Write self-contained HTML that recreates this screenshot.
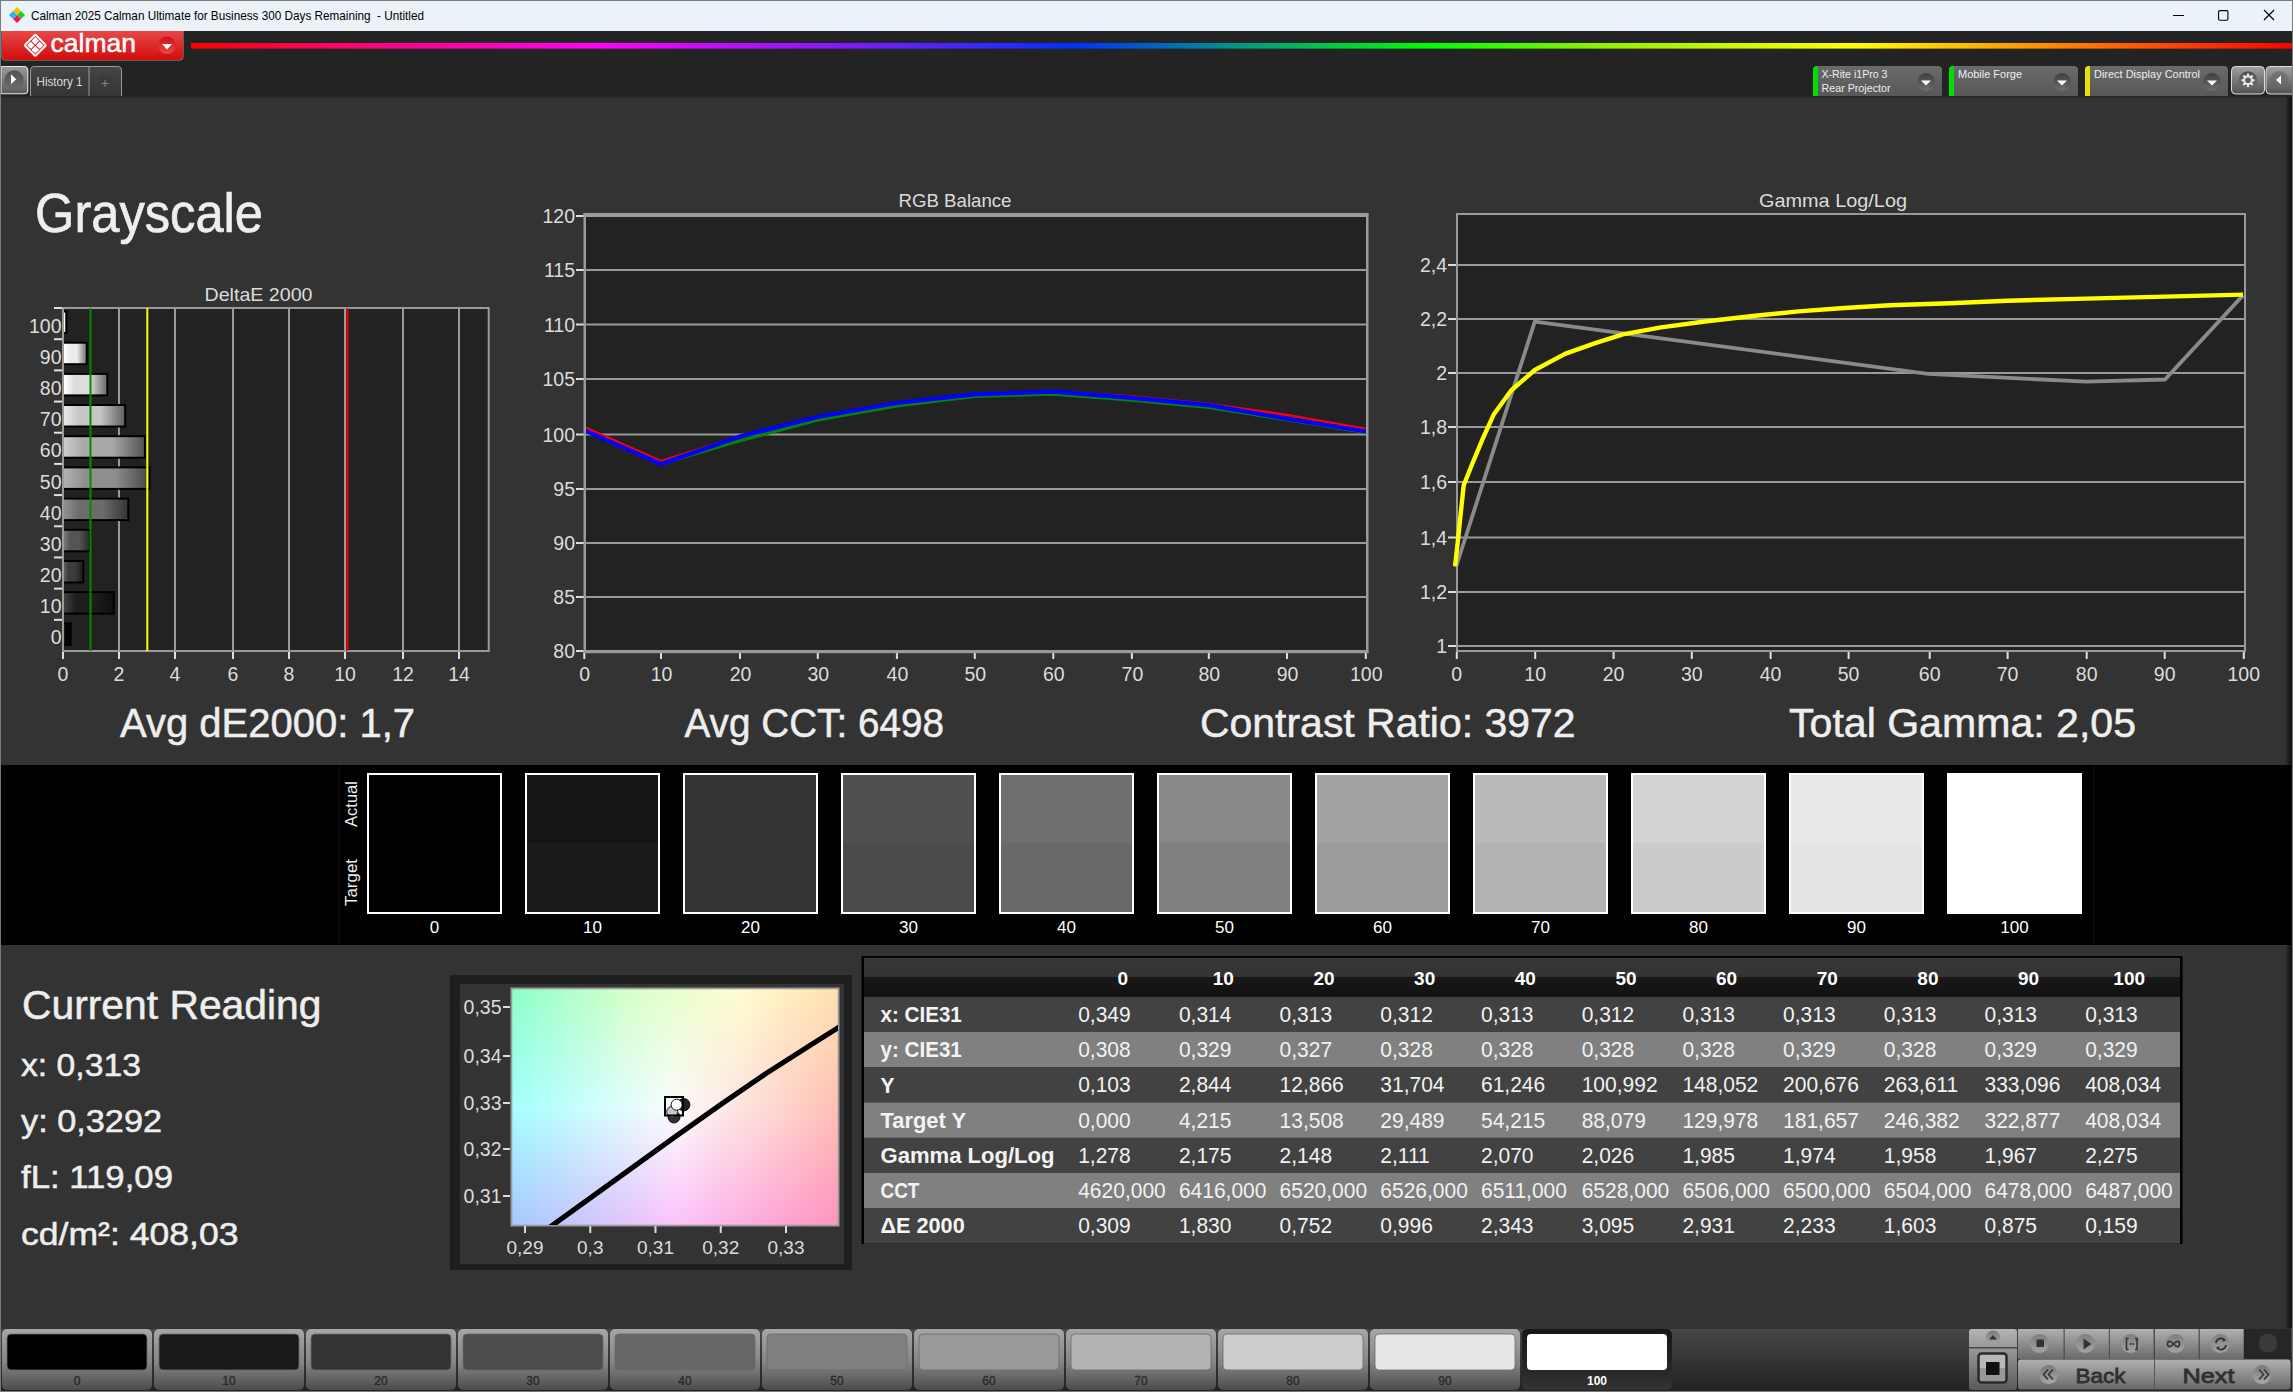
<!DOCTYPE html>
<html><head><meta charset="utf-8"><title>Calman Grayscale</title>
<style>html,body{margin:0;padding:0;background:#333;overflow:hidden;}svg{display:block;}text{font-family:"Liberation Sans", sans-serif;}</style>
</head><body>
<svg width="2293" height="1392" viewBox="0 0 2293 1392">
<defs><linearGradient id="redg" x1="0" y1="0" x2="0" y2="1"><stop offset="0" stop-color="#e84848"/><stop offset="1" stop-color="#d20c0c"/></linearGradient><linearGradient id="rcirc" x1="0" y1="0" x2="0" y2="1"><stop offset="0" stop-color="#cc0e12"/><stop offset="1" stop-color="#ea4a4a"/></linearGradient><linearGradient id="spec" x1="0" y1="0" x2="1" y2="0"><stop offset="0" stop-color="#ff0000"/><stop offset="0.087" stop-color="#ff0080"/><stop offset="0.196" stop-color="#ff00ff"/><stop offset="0.34" stop-color="#6020ff"/><stop offset="0.42" stop-color="#0030ff"/><stop offset="0.5" stop-color="#009a80"/><stop offset="0.59" stop-color="#00ff00"/><stop offset="0.67" stop-color="#90f000"/><stop offset="0.79" stop-color="#ffff00"/><stop offset="0.87" stop-color="#ff9a00"/><stop offset="1" stop-color="#ff0000"/></linearGradient><linearGradient id="btng" x1="0" y1="0" x2="0" y2="1"><stop offset="0" stop-color="#9a9a9a"/><stop offset="1" stop-color="#5a5a5a"/></linearGradient><linearGradient id="tabg" x1="0" y1="0" x2="0" y2="1"><stop offset="0" stop-color="#454545"/><stop offset="1" stop-color="#353535"/></linearGradient><linearGradient id="devg" x1="0" y1="0" x2="0" y2="1"><stop offset="0" stop-color="#6a6a6a"/><stop offset="1" stop-color="#585858"/></linearGradient><linearGradient id="arrg" x1="0" y1="0" x2="0" y2="1"><stop offset="0" stop-color="#3e3e3e"/><stop offset="1" stop-color="#6e6e6e"/></linearGradient><linearGradient id="gbtn" x1="0" y1="0" x2="0" y2="1"><stop offset="0" stop-color="#a0a0a0"/><stop offset="1" stop-color="#505050"/></linearGradient><linearGradient id="bar100" x1="0" y1="0" x2="1" y2="0"><stop offset="0" stop-color="rgb(255,255,255)"/><stop offset="0.25" stop-color="rgb(255,255,255)"/><stop offset="0.6" stop-color="rgb(255,255,255)"/><stop offset="1" stop-color="rgb(127,127,127)"/></linearGradient><linearGradient id="bar90" x1="0" y1="0" x2="1" y2="0"><stop offset="0" stop-color="rgb(255,255,255)"/><stop offset="0.25" stop-color="rgb(236,236,236)"/><stop offset="0.6" stop-color="rgb(236,236,236)"/><stop offset="1" stop-color="rgb(118,118,118)"/></linearGradient><linearGradient id="bar80" x1="0" y1="0" x2="1" y2="0"><stop offset="0" stop-color="rgb(255,255,255)"/><stop offset="0.25" stop-color="rgb(221,221,221)"/><stop offset="0.6" stop-color="rgb(221,221,221)"/><stop offset="1" stop-color="rgb(110,110,110)"/></linearGradient><linearGradient id="bar70" x1="0" y1="0" x2="1" y2="0"><stop offset="0" stop-color="rgb(233,233,233)"/><stop offset="0.25" stop-color="rgb(198,198,198)"/><stop offset="0.6" stop-color="rgb(198,198,198)"/><stop offset="1" stop-color="rgb(99,99,99)"/></linearGradient><linearGradient id="bar60" x1="0" y1="0" x2="1" y2="0"><stop offset="0" stop-color="rgb(204,204,204)"/><stop offset="0.25" stop-color="rgb(169,169,169)"/><stop offset="0.6" stop-color="rgb(169,169,169)"/><stop offset="1" stop-color="rgb(84,84,84)"/></linearGradient><linearGradient id="bar50" x1="0" y1="0" x2="1" y2="0"><stop offset="0" stop-color="rgb(177,177,177)"/><stop offset="0.25" stop-color="rgb(142,142,142)"/><stop offset="0.6" stop-color="rgb(142,142,142)"/><stop offset="1" stop-color="rgb(71,71,71)"/></linearGradient><linearGradient id="bar40" x1="0" y1="0" x2="1" y2="0"><stop offset="0" stop-color="rgb(143,143,143)"/><stop offset="0.25" stop-color="rgb(108,108,108)"/><stop offset="0.6" stop-color="rgb(108,108,108)"/><stop offset="1" stop-color="rgb(54,54,54)"/></linearGradient><linearGradient id="bar30" x1="0" y1="0" x2="1" y2="0"><stop offset="0" stop-color="rgb(120,120,120)"/><stop offset="0.25" stop-color="rgb(85,85,85)"/><stop offset="0.6" stop-color="rgb(85,85,85)"/><stop offset="1" stop-color="rgb(42,42,42)"/></linearGradient><linearGradient id="bar20" x1="0" y1="0" x2="1" y2="0"><stop offset="0" stop-color="rgb(95,95,95)"/><stop offset="0.25" stop-color="rgb(60,60,60)"/><stop offset="0.6" stop-color="rgb(60,60,60)"/><stop offset="1" stop-color="rgb(30,30,30)"/></linearGradient><linearGradient id="bar10" x1="0" y1="0" x2="1" y2="0"><stop offset="0" stop-color="rgb(65,65,65)"/><stop offset="0.25" stop-color="rgb(30,30,30)"/><stop offset="0.6" stop-color="rgb(30,30,30)"/><stop offset="1" stop-color="rgb(15,15,15)"/></linearGradient><linearGradient id="bar0" x1="0" y1="0" x2="1" y2="0"><stop offset="0" stop-color="rgb(39,39,39)"/><stop offset="0.25" stop-color="rgb(4,4,4)"/><stop offset="0.6" stop-color="rgb(4,4,4)"/><stop offset="1" stop-color="rgb(2,2,2)"/></linearGradient><clipPath id="rgbclip"><rect x="586" y="217" width="780" height="433"/></clipPath><linearGradient id="cieB" x1="0" y1="0" x2="1" y2="0"><stop offset="0" stop-color="#a8c8ff"/><stop offset="0.5" stop-color="#fcc4fc"/><stop offset="1" stop-color="#ff94c0"/></linearGradient><linearGradient id="cieM" x1="0" y1="0" x2="1" y2="0"><stop offset="0" stop-color="#a4ffff"/><stop offset="0.5" stop-color="#fcfcfc"/><stop offset="1" stop-color="#ffc0b4"/></linearGradient><linearGradient id="cieT" x1="0" y1="0" x2="1" y2="0"><stop offset="0" stop-color="#8cffc8"/><stop offset="0.35" stop-color="#d4ffc8"/><stop offset="0.7" stop-color="#fffcd0"/><stop offset="1" stop-color="#ffe0b0"/></linearGradient><linearGradient id="mM" x1="0" y1="1" x2="0" y2="0"><stop offset="0" stop-color="#fff" stop-opacity="0"/><stop offset="0.5" stop-color="#fff" stop-opacity="1"/><stop offset="1" stop-color="#fff" stop-opacity="1"/></linearGradient><linearGradient id="mT" x1="0" y1="1" x2="0" y2="0"><stop offset="0.5" stop-color="#fff" stop-opacity="0"/><stop offset="1" stop-color="#fff" stop-opacity="1"/></linearGradient><mask id="maskM" maskContentUnits="objectBoundingBox"><rect width="1" height="1" fill="url(#mM)"/></mask><mask id="maskT" maskContentUnits="objectBoundingBox"><rect width="1" height="1" fill="url(#mT)"/></mask><clipPath id="cieclip"><rect x="512" y="989" width="326" height="236"/></clipPath><linearGradient id="hdrg" x1="0" y1="0" x2="0" y2="1"><stop offset="0" stop-color="#373737"/><stop offset="0.5" stop-color="#333333"/><stop offset="0.5" stop-color="#181818"/><stop offset="1" stop-color="#121212"/></linearGradient><linearGradient id="bbg" x1="0" y1="0" x2="0" y2="1"><stop offset="0" stop-color="#474747"/><stop offset="1" stop-color="#222222"/></linearGradient><linearGradient id="pbtn" x1="0" y1="0" x2="0" y2="1"><stop offset="0" stop-color="#a6a6a6"/><stop offset="0.55" stop-color="#858585"/><stop offset="1" stop-color="#4c4c4c"/></linearGradient><linearGradient id="pbtnS" x1="0" y1="0" x2="0" y2="1"><stop offset="0" stop-color="#181818"/><stop offset="0.5" stop-color="#222"/><stop offset="1" stop-color="#333333"/></linearGradient><linearGradient id="cbtn" x1="0" y1="0" x2="0" y2="1"><stop offset="0" stop-color="#b0b0b0"/><stop offset="1" stop-color="#6a6a6a"/></linearGradient><linearGradient id="cbtn2" x1="0" y1="0" x2="0" y2="1"><stop offset="0" stop-color="#b4b4b4"/><stop offset="1" stop-color="#5a5a5a"/></linearGradient><linearGradient id="circg" x1="0" y1="0" x2="0" y2="1"><stop offset="0" stop-color="#7a7a7a"/><stop offset="1" stop-color="#a8a8a8"/></linearGradient><linearGradient id="rsh" x1="0" y1="0" x2="1" y2="0"><stop offset="0" stop-color="#000" stop-opacity="0"/><stop offset="1" stop-color="#000" stop-opacity="0.75"/></linearGradient></defs>
<rect x="0" y="0" width="2293" height="1392" fill="#333333"/>
<rect x="0" y="0" width="2293" height="31" fill="#ebf3f8"/>
<rect x="0" y="0" width="2293" height="1" fill="#7a7a7a"/>
<g transform="translate(17,15)"><path d="M0,-8 L4,-4 L0,0 L-4,-4Z" fill="#f5c000"/><path d="M4,-4 L8,0 L4,4 L0,0Z" fill="#20d020"/><path d="M0,0 L4,4 L0,8 L-4,4Z" fill="#ff1060"/><path d="M-4,-4 L0,0 L-4,4 L-8,0Z" fill="#20b8f0"/></g>
<text x="31" y="20" font-size="13" fill="#000" text-anchor="start" font-weight="normal" textLength="393" lengthAdjust="spacingAndGlyphs" >Calman 2025 Calman Ultimate for Business 300 Days Remaining&#160; - Untitled</text>
<rect x="2173" y="15" width="11" height="1" fill="#000"/>
<rect x="2218.6" y="10.6" width="9.3" height="9.6" rx="1.2" fill="none" stroke="#000" stroke-width="1.1"/>
<path d="M2264,10 L2274,20 M2274,10 L2264,20" stroke="#000" stroke-width="1.2"/>
<rect x="0" y="31" width="2293" height="65" fill="#232323"/>
<rect x="0" y="96" width="2293" height="1.5" fill="#262626"/>
<path d="M1.5,31 H183.5 V56 Q183.5,60.5 179,60.5 H6 Q1.5,60.5 1.5,56 Z" fill="#9a9a9a"/>
<path d="M2,31 H183 V56 Q183,60 179,60 H6 Q2,60 2,56 Z" fill="url(#redg)"/>
<g transform="translate(35.3,45.3) rotate(45)"><rect x="-8.6" y="-8.6" width="17.2" height="17.2" rx="2" fill="#fff"/><rect x="-6.6" y="-6.6" width="13.2" height="13.2" fill="#dc2a2a"/><g fill="#fff"><rect x="-5.8" y="-5.8" width="5.3" height="5.3" rx="0.6"/><rect x="-5.8" y="0.5" width="5.3" height="5.3" rx="0.6"/><rect x="0.5" y="-5.8" width="5.3" height="5.3" rx="0.6"/><rect x="0.5" y="0.5" width="5.3" height="5.3" rx="0.6"/></g></g>
<text x="50.5" y="51.8" font-size="26" fill="#fff" text-anchor="start" font-weight="normal" textLength="85.5" lengthAdjust="spacingAndGlyphs" stroke="#fff" stroke-width="0.5">calman</text>
<circle cx="167" cy="45.3" r="8.8" fill="url(#rcirc)"/>
<path d="M162,44 H172 L167,49.5Z" fill="#fff"/>
<rect x="191" y="43" width="2102" height="5.6" fill="url(#spec)"/>
<path d="M1,66.5 H24 Q27.8,66.5 27.8,70.5 V90 Q27.8,93.8 24,93.8 H1Z" fill="url(#btng)" stroke="#e6e6e6" stroke-width="1.1"/>
<circle cx="14.1" cy="79.8" r="9.5" fill="url(#arrg)" opacity="0.75"/>
<path d="M11,74.2 L16.2,79.3 L11,84.2Z" fill="#fff"/>
<path d="M30.5,96 V70 Q30.5,66.5 34,66.5 H118 Q121.5,66.5 121.5,70 V96" fill="url(#tabg)" stroke="#9a9a9a" stroke-width="1"/>
<rect x="88.5" y="66.5" width="1" height="29.5" fill="#9a9a9a"/>
<text x="36.5" y="86" font-size="12" fill="#dcdcdc" text-anchor="start" font-weight="normal" textLength="46" lengthAdjust="spacingAndGlyphs" >History 1</text>
<circle cx="105" cy="83" r="8" fill="#3a3a3a"/>
<path d="M101.5,83.5 H108.5 M105,80 V87" stroke="#888" stroke-width="1"/>
<path d="M1813,96 V70 Q1813,66 1817,66 H1938 Q1942,66 1942,70 V96Z" fill="url(#devg)"/>
<path d="M1813,96 V70 Q1813,66 1817,66 H1818 V96Z" fill="#00e000"/>
<text x="1821.5" y="78" font-size="11.5" fill="#eee" text-anchor="start" font-weight="normal" textLength="66" lengthAdjust="spacingAndGlyphs" >X-Rite i1Pro 3</text>
<text x="1821.5" y="92" font-size="11.5" fill="#eee" text-anchor="start" font-weight="normal" textLength="69" lengthAdjust="spacingAndGlyphs" >Rear Projector</text>
<circle cx="1926" cy="82" r="9" fill="url(#arrg)"/>
<path d="M1921,80.5 H1931 L1926,85.5Z" fill="#fff"/>
<path d="M1949,96 V70 Q1949,66 1953,66 H2074 Q2078,66 2078,70 V96Z" fill="url(#devg)"/>
<path d="M1949,96 V70 Q1949,66 1953,66 H1954 V96Z" fill="#00e000"/>
<text x="1958" y="78" font-size="11.5" fill="#eee" text-anchor="start" font-weight="normal" textLength="64" lengthAdjust="spacingAndGlyphs" >Mobile Forge</text>
<circle cx="2062" cy="82" r="9" fill="url(#arrg)"/>
<path d="M2057,80.5 H2067 L2062,85.5Z" fill="#fff"/>
<path d="M2085,96 V70 Q2085,66 2089,66 H2224 Q2228,66 2228,70 V96Z" fill="url(#devg)"/>
<path d="M2085,96 V70 Q2085,66 2089,66 H2090 V96Z" fill="#e8e000"/>
<text x="2094" y="78" font-size="11.5" fill="#eee" text-anchor="start" font-weight="normal" textLength="106" lengthAdjust="spacingAndGlyphs" >Direct Display Control</text>
<circle cx="2212" cy="82" r="9" fill="url(#arrg)"/>
<path d="M2207,80.5 H2217 L2212,85.5Z" fill="#fff"/>
<rect x="2231.5" y="66.5" width="33" height="27.5" rx="4" fill="url(#gbtn)" stroke="#dcdcdc" stroke-width="1"/>
<circle cx="2248" cy="80.2" r="9" fill="url(#arrg)" opacity="0.8"/>
<path d="M2252.62,78.29 L2252.89,79.16 L2254.72,79.14 L2254.72,81.26 L2252.89,81.24 L2252.62,82.11 L2252.19,82.92 L2253.50,84.20 L2252.00,85.70 L2250.72,84.39 L2249.91,84.82 L2249.04,85.09 L2249.06,86.92 L2246.94,86.92 L2246.96,85.09 L2246.09,84.82 L2245.28,84.39 L2244.00,85.70 L2242.50,84.20 L2243.81,82.92 L2243.38,82.11 L2243.11,81.24 L2241.28,81.26 L2241.28,79.14 L2243.11,79.16 L2243.38,78.29 L2243.81,77.48 L2242.50,76.20 L2244.00,74.70 L2245.28,76.01 L2246.09,75.58 L2246.96,75.31 L2246.94,73.48 L2249.06,73.48 L2249.04,75.31 L2249.91,75.58 L2250.72,76.01 L2252.00,74.70 L2253.50,76.20 L2252.19,77.48 Z M2250.8,80.2 A2.8,2.8 0 1 0 2245.2,80.2 A2.8,2.8 0 1 0 2250.8,80.2 Z" fill="#e4e4e4" fill-rule="evenodd"/>
<rect x="2266" y="66.5" width="30" height="27.5" rx="4" fill="url(#gbtn)" stroke="#dcdcdc" stroke-width="1"/>
<circle cx="2279" cy="80" r="9" fill="#6a6a6a" opacity="0.7"/>
<path d="M2276,80 L2281,75.5 V84.5Z" fill="#fff"/>
<text x="258.5" y="300.5" font-size="19" fill="#dcdcdc" text-anchor="middle" font-weight="normal" textLength="108" lengthAdjust="spacingAndGlyphs" >DeltaE 2000</text>
<rect x="63" y="308" width="425" height="343" fill="#222222"/>
<rect x="62" y="652" width="2" height="7" fill="#e0e0e0"/>
<text x="63" y="681" font-size="19.5" fill="#dcdcdc" text-anchor="middle" font-weight="normal" >0</text>
<rect x="118" y="308" width="2" height="343" fill="#9a9a9a"/>
<rect x="118" y="652" width="2" height="7" fill="#e0e0e0"/>
<text x="119" y="681" font-size="19.5" fill="#dcdcdc" text-anchor="middle" font-weight="normal" >2</text>
<rect x="174" y="308" width="2" height="343" fill="#9a9a9a"/>
<rect x="174" y="652" width="2" height="7" fill="#e0e0e0"/>
<text x="175" y="681" font-size="19.5" fill="#dcdcdc" text-anchor="middle" font-weight="normal" >4</text>
<rect x="232" y="308" width="2" height="343" fill="#9a9a9a"/>
<rect x="232" y="652" width="2" height="7" fill="#e0e0e0"/>
<text x="233" y="681" font-size="19.5" fill="#dcdcdc" text-anchor="middle" font-weight="normal" >6</text>
<rect x="288" y="308" width="2" height="343" fill="#9a9a9a"/>
<rect x="288" y="652" width="2" height="7" fill="#e0e0e0"/>
<text x="289" y="681" font-size="19.5" fill="#dcdcdc" text-anchor="middle" font-weight="normal" >8</text>
<rect x="344" y="308" width="2" height="343" fill="#9a9a9a"/>
<rect x="344" y="652" width="2" height="7" fill="#e0e0e0"/>
<text x="345" y="681" font-size="19.5" fill="#dcdcdc" text-anchor="middle" font-weight="normal" >10</text>
<rect x="402" y="308" width="2" height="343" fill="#9a9a9a"/>
<rect x="402" y="652" width="2" height="7" fill="#e0e0e0"/>
<text x="403" y="681" font-size="19.5" fill="#dcdcdc" text-anchor="middle" font-weight="normal" >12</text>
<rect x="458" y="308" width="2" height="343" fill="#9a9a9a"/>
<rect x="458" y="652" width="2" height="7" fill="#e0e0e0"/>
<text x="459" y="681" font-size="19.5" fill="#dcdcdc" text-anchor="middle" font-weight="normal" >14</text>
<rect x="62" y="307" width="427" height="2" fill="#9a9a9a"/>
<rect x="487.7" y="307" width="2" height="345" fill="#9a9a9a"/>
<rect x="62" y="650" width="427.7" height="2" fill="#9a9a9a"/>
<rect x="62" y="307" width="2" height="345" fill="#9a9a9a"/>
<rect x="54" y="307.0" width="8" height="2" fill="#e0e0e0"/>
<text x="61.5" y="332.59090909090907" font-size="19.5" fill="#dcdcdc" text-anchor="end" font-weight="normal" >100</text>
<rect x="64" y="310.5" width="3.5" height="23.5" fill="#000"/>
<rect x="64" y="312.5" width="1.5" height="19.5" fill="url(#bar100)"/>
<rect x="54" y="338.1818181818182" width="8" height="2" fill="#e0e0e0"/>
<text x="61.5" y="363.77272727272725" font-size="19.5" fill="#dcdcdc" text-anchor="end" font-weight="normal" >90</text>
<rect x="64" y="341.7" width="23.8" height="23.5" fill="#000"/>
<rect x="64" y="343.7" width="21.8" height="19.5" fill="url(#bar90)"/>
<rect x="54" y="369.3636363636364" width="8" height="2" fill="#e0e0e0"/>
<text x="61.5" y="394.95454545454544" font-size="19.5" fill="#dcdcdc" text-anchor="end" font-weight="normal" >80</text>
<rect x="64" y="372.9" width="44.3" height="23.5" fill="#000"/>
<rect x="64" y="374.9" width="42.3" height="19.5" fill="url(#bar80)"/>
<rect x="54" y="400.54545454545456" width="8" height="2" fill="#e0e0e0"/>
<text x="61.5" y="426.1363636363636" font-size="19.5" fill="#dcdcdc" text-anchor="end" font-weight="normal" >70</text>
<rect x="64" y="404.0" width="62.2" height="23.5" fill="#000"/>
<rect x="64" y="406.0" width="60.2" height="19.5" fill="url(#bar70)"/>
<rect x="54" y="431.72727272727275" width="8" height="2" fill="#e0e0e0"/>
<text x="61.5" y="457.3181818181818" font-size="19.5" fill="#dcdcdc" text-anchor="end" font-weight="normal" >60</text>
<rect x="64" y="435.2" width="81.9" height="23.5" fill="#000"/>
<rect x="64" y="437.2" width="79.9" height="19.5" fill="url(#bar60)"/>
<rect x="54" y="462.9090909090909" width="8" height="2" fill="#e0e0e0"/>
<text x="61.5" y="488.49999999999994" font-size="19.5" fill="#dcdcdc" text-anchor="end" font-weight="normal" >50</text>
<rect x="64" y="466.4" width="86.6" height="23.5" fill="#000"/>
<rect x="64" y="468.4" width="84.6" height="19.5" fill="url(#bar50)"/>
<rect x="54" y="494.0909090909091" width="8" height="2" fill="#e0e0e0"/>
<text x="61.5" y="519.6818181818182" font-size="19.5" fill="#dcdcdc" text-anchor="end" font-weight="normal" >40</text>
<rect x="64" y="497.6" width="65.3" height="23.5" fill="#000"/>
<rect x="64" y="499.6" width="63.3" height="19.5" fill="url(#bar40)"/>
<rect x="54" y="525.2727272727273" width="8" height="2" fill="#e0e0e0"/>
<text x="61.5" y="550.8636363636364" font-size="19.5" fill="#dcdcdc" text-anchor="end" font-weight="normal" >30</text>
<rect x="64" y="528.8" width="27.2" height="23.5" fill="#000"/>
<rect x="64" y="530.8" width="25.2" height="19.5" fill="url(#bar30)"/>
<rect x="54" y="556.4545454545455" width="8" height="2" fill="#e0e0e0"/>
<text x="61.5" y="582.0454545454546" font-size="19.5" fill="#dcdcdc" text-anchor="end" font-weight="normal" >20</text>
<rect x="64" y="560.0" width="20.3" height="23.5" fill="#000"/>
<rect x="64" y="562.0" width="18.3" height="19.5" fill="url(#bar20)"/>
<rect x="54" y="587.6363636363636" width="8" height="2" fill="#e0e0e0"/>
<text x="61.5" y="613.2272727272727" font-size="19.5" fill="#dcdcdc" text-anchor="end" font-weight="normal" >10</text>
<rect x="64" y="591.1" width="50.8" height="23.5" fill="#000"/>
<rect x="64" y="593.1" width="48.8" height="19.5" fill="url(#bar10)"/>
<rect x="54" y="618.8181818181818" width="8" height="2" fill="#e0e0e0"/>
<text x="61.5" y="644.4090909090909" font-size="19.5" fill="#dcdcdc" text-anchor="end" font-weight="normal" >0</text>
<rect x="64" y="622.3" width="7.7" height="23.5" fill="#000"/>
<rect x="64" y="624.3" width="5.7" height="19.5" fill="url(#bar0)"/>
<rect x="89.5" y="308" width="2" height="343" fill="#008a00"/>
<rect x="146.3" y="308" width="2" height="343" fill="#ffff00"/>
<rect x="346.4" y="308" width="2" height="343" fill="#ff0000"/>
<text x="955" y="207" font-size="19" fill="#dcdcdc" text-anchor="middle" font-weight="normal" textLength="113" lengthAdjust="spacingAndGlyphs" >RGB Balance</text>
<rect x="585" y="215" width="782" height="436" fill="#222222"/>
<rect x="585" y="650" width="782" height="2" fill="#9a9a9a"/>
<rect x="576" y="650" width="8" height="2" fill="#dcdcdc"/>
<text x="575" y="658" font-size="19.5" fill="#dcdcdc" text-anchor="end" font-weight="normal" >80</text>
<rect x="585" y="596" width="782" height="2" fill="#9a9a9a"/>
<rect x="576" y="596" width="8" height="2" fill="#dcdcdc"/>
<text x="575" y="604" font-size="19.5" fill="#dcdcdc" text-anchor="end" font-weight="normal" >85</text>
<rect x="585" y="542" width="782" height="2" fill="#9a9a9a"/>
<rect x="576" y="542" width="8" height="2" fill="#dcdcdc"/>
<text x="575" y="550" font-size="19.5" fill="#dcdcdc" text-anchor="end" font-weight="normal" >90</text>
<rect x="585" y="488" width="782" height="2" fill="#9a9a9a"/>
<rect x="576" y="488" width="8" height="2" fill="#dcdcdc"/>
<text x="575" y="496" font-size="19.5" fill="#dcdcdc" text-anchor="end" font-weight="normal" >95</text>
<rect x="585" y="433.5" width="782" height="2" fill="#9a9a9a"/>
<rect x="576" y="433.5" width="8" height="2" fill="#dcdcdc"/>
<text x="575" y="441.5" font-size="19.5" fill="#dcdcdc" text-anchor="end" font-weight="normal" >100</text>
<rect x="585" y="378" width="782" height="2" fill="#9a9a9a"/>
<rect x="576" y="378" width="8" height="2" fill="#dcdcdc"/>
<text x="575" y="386" font-size="19.5" fill="#dcdcdc" text-anchor="end" font-weight="normal" >105</text>
<rect x="585" y="323.5" width="782" height="2" fill="#9a9a9a"/>
<rect x="576" y="323.5" width="8" height="2" fill="#dcdcdc"/>
<text x="575" y="331.5" font-size="19.5" fill="#dcdcdc" text-anchor="end" font-weight="normal" >110</text>
<rect x="585" y="269" width="782" height="2" fill="#9a9a9a"/>
<rect x="576" y="269" width="8" height="2" fill="#dcdcdc"/>
<text x="575" y="277" font-size="19.5" fill="#dcdcdc" text-anchor="end" font-weight="normal" >115</text>
<rect x="585" y="215" width="782" height="2" fill="#9a9a9a"/>
<rect x="576" y="215" width="8" height="2" fill="#dcdcdc"/>
<text x="575" y="223" font-size="19.5" fill="#dcdcdc" text-anchor="end" font-weight="normal" >120</text>
<rect x="583.3" y="653" width="2" height="6" fill="#e0e0e0"/>
<text x="584.8" y="681" font-size="19.5" fill="#dcdcdc" text-anchor="middle" font-weight="normal" >0</text>
<rect x="660" y="653" width="2" height="6" fill="#e0e0e0"/>
<text x="661.5" y="681" font-size="19.5" fill="#dcdcdc" text-anchor="middle" font-weight="normal" >10</text>
<rect x="739" y="653" width="2" height="6" fill="#e0e0e0"/>
<text x="740.5" y="681" font-size="19.5" fill="#dcdcdc" text-anchor="middle" font-weight="normal" >20</text>
<rect x="816.8" y="653" width="2" height="6" fill="#e0e0e0"/>
<text x="818.3" y="681" font-size="19.5" fill="#dcdcdc" text-anchor="middle" font-weight="normal" >30</text>
<rect x="895.9" y="653" width="2" height="6" fill="#e0e0e0"/>
<text x="897.4" y="681" font-size="19.5" fill="#dcdcdc" text-anchor="middle" font-weight="normal" >40</text>
<rect x="973.8" y="653" width="2" height="6" fill="#e0e0e0"/>
<text x="975.3" y="681" font-size="19.5" fill="#dcdcdc" text-anchor="middle" font-weight="normal" >50</text>
<rect x="1052.3" y="653" width="2" height="6" fill="#e0e0e0"/>
<text x="1053.8" y="681" font-size="19.5" fill="#dcdcdc" text-anchor="middle" font-weight="normal" >60</text>
<rect x="1130.9" y="653" width="2" height="6" fill="#e0e0e0"/>
<text x="1132.4" y="681" font-size="19.5" fill="#dcdcdc" text-anchor="middle" font-weight="normal" >70</text>
<rect x="1207.8" y="653" width="2" height="6" fill="#e0e0e0"/>
<text x="1209.3" y="681" font-size="19.5" fill="#dcdcdc" text-anchor="middle" font-weight="normal" >80</text>
<rect x="1286" y="653" width="2" height="6" fill="#e0e0e0"/>
<text x="1287.5" y="681" font-size="19.5" fill="#dcdcdc" text-anchor="middle" font-weight="normal" >90</text>
<rect x="1364.8" y="653" width="2" height="6" fill="#e0e0e0"/>
<text x="1366.3" y="681" font-size="19.5" fill="#dcdcdc" text-anchor="middle" font-weight="normal" >100</text>
<rect x="583.5" y="213" width="785" height="4" fill="#9a9a9a"/>
<rect x="583.5" y="213" width="2.5" height="440" fill="#9a9a9a"/>
<rect x="1366" y="213" width="2.5" height="440" fill="#9a9a9a"/>
<rect x="583.5" y="650" width="785" height="3.2" fill="#9a9a9a"/>
<g clip-path="url(#rgbclip)">
<polyline points="584.3,430.0 661.0,464.0 740.0,440.8 817.8,420.0 896.9,406.0 974.8,396.6 1053.3,394.2 1131.9,400.3 1208.8,407.6 1287.0,419.8 1365.8,432.5" fill="none" stroke="#008800" stroke-width="3"/>
<polyline points="584.3,427.2 661.0,461.2 740.0,436.5 817.8,417.0 896.9,403.0 974.8,394.4 1053.3,391.7 1131.9,396.6 1208.8,404.0 1287.0,415.0 1365.8,429.0" fill="none" stroke="#ff0000" stroke-width="2.6"/>
<polyline points="584.3,430.3 661.0,463.9 740.0,436.5 817.8,417.0 896.9,403.0 974.8,394.4 1053.3,391.7 1131.9,397.8 1208.8,405.2 1287.0,418.6 1365.8,431.5" fill="none" stroke="#0000ff" stroke-width="4.2"/>
</g>
<text x="1833" y="207" font-size="19" fill="#dcdcdc" text-anchor="middle" font-weight="normal" textLength="148" lengthAdjust="spacingAndGlyphs" >Gamma Log/Log</text>
<rect x="1457" y="214" width="788" height="437" fill="#222222"/>
<rect x="1457" y="264" width="788" height="2" fill="#9a9a9a"/>
<rect x="1448" y="264" width="8" height="2" fill="#dcdcdc"/>
<text x="1447" y="272" font-size="19.5" fill="#dcdcdc" text-anchor="end" font-weight="normal" >2,4</text>
<rect x="1457" y="318" width="788" height="2" fill="#9a9a9a"/>
<rect x="1448" y="318" width="8" height="2" fill="#dcdcdc"/>
<text x="1447" y="326" font-size="19.5" fill="#dcdcdc" text-anchor="end" font-weight="normal" >2,2</text>
<rect x="1457" y="372" width="788" height="2" fill="#9a9a9a"/>
<rect x="1448" y="372" width="8" height="2" fill="#dcdcdc"/>
<text x="1447" y="380" font-size="19.5" fill="#dcdcdc" text-anchor="end" font-weight="normal" >2</text>
<rect x="1457" y="426" width="788" height="2" fill="#9a9a9a"/>
<rect x="1448" y="426" width="8" height="2" fill="#dcdcdc"/>
<text x="1447" y="434" font-size="19.5" fill="#dcdcdc" text-anchor="end" font-weight="normal" >1,8</text>
<rect x="1457" y="481" width="788" height="2" fill="#9a9a9a"/>
<rect x="1448" y="481" width="8" height="2" fill="#dcdcdc"/>
<text x="1447" y="489" font-size="19.5" fill="#dcdcdc" text-anchor="end" font-weight="normal" >1,6</text>
<rect x="1457" y="536.5" width="788" height="2" fill="#9a9a9a"/>
<rect x="1448" y="536.5" width="8" height="2" fill="#dcdcdc"/>
<text x="1447" y="544.5" font-size="19.5" fill="#dcdcdc" text-anchor="end" font-weight="normal" >1,4</text>
<rect x="1457" y="591" width="788" height="2" fill="#9a9a9a"/>
<rect x="1448" y="591" width="8" height="2" fill="#dcdcdc"/>
<text x="1447" y="599" font-size="19.5" fill="#dcdcdc" text-anchor="end" font-weight="normal" >1,2</text>
<rect x="1457" y="645" width="788" height="2" fill="#9a9a9a"/>
<rect x="1448" y="645" width="8" height="2" fill="#dcdcdc"/>
<text x="1447" y="653" font-size="19.5" fill="#dcdcdc" text-anchor="end" font-weight="normal" >1</text>
<rect x="1455.8" y="652" width="2" height="7" fill="#e0e0e0"/>
<text x="1456.8" y="681" font-size="19.5" fill="#dcdcdc" text-anchor="middle" font-weight="normal" >0</text>
<rect x="1534.2" y="652" width="2" height="7" fill="#e0e0e0"/>
<text x="1535.2" y="681" font-size="19.5" fill="#dcdcdc" text-anchor="middle" font-weight="normal" >10</text>
<rect x="1612.6" y="652" width="2" height="7" fill="#e0e0e0"/>
<text x="1613.6" y="681" font-size="19.5" fill="#dcdcdc" text-anchor="middle" font-weight="normal" >20</text>
<rect x="1690.8" y="652" width="2" height="7" fill="#e0e0e0"/>
<text x="1691.8" y="681" font-size="19.5" fill="#dcdcdc" text-anchor="middle" font-weight="normal" >30</text>
<rect x="1769.6" y="652" width="2" height="7" fill="#e0e0e0"/>
<text x="1770.6" y="681" font-size="19.5" fill="#dcdcdc" text-anchor="middle" font-weight="normal" >40</text>
<rect x="1847.6" y="652" width="2" height="7" fill="#e0e0e0"/>
<text x="1848.6" y="681" font-size="19.5" fill="#dcdcdc" text-anchor="middle" font-weight="normal" >50</text>
<rect x="1928.7" y="652" width="2" height="7" fill="#e0e0e0"/>
<text x="1929.7" y="681" font-size="19.5" fill="#dcdcdc" text-anchor="middle" font-weight="normal" >60</text>
<rect x="2006.6" y="652" width="2" height="7" fill="#e0e0e0"/>
<text x="2007.6" y="681" font-size="19.5" fill="#dcdcdc" text-anchor="middle" font-weight="normal" >70</text>
<rect x="2085.7" y="652" width="2" height="7" fill="#e0e0e0"/>
<text x="2086.7" y="681" font-size="19.5" fill="#dcdcdc" text-anchor="middle" font-weight="normal" >80</text>
<rect x="2163.7" y="652" width="2" height="7" fill="#e0e0e0"/>
<text x="2164.7" y="681" font-size="19.5" fill="#dcdcdc" text-anchor="middle" font-weight="normal" >90</text>
<rect x="2242.8" y="652" width="2" height="7" fill="#e0e0e0"/>
<text x="2243.8" y="681" font-size="19.5" fill="#dcdcdc" text-anchor="middle" font-weight="normal" >100</text>
<rect x="1456" y="213" width="790" height="2" fill="#9a9a9a"/>
<rect x="1456" y="213" width="2" height="439" fill="#9a9a9a"/>
<rect x="2244" y="213" width="2" height="439" fill="#9a9a9a"/>
<rect x="1456" y="650" width="790" height="2" fill="#9a9a9a"/>
<polyline points="1456,567 1534.8,321.6 1928,373.8 2086,381.7 2165,379.5 2243,295.4" fill="none" stroke="#8a8a8a" stroke-width="3.8" stroke-linejoin="round"/>
<polyline points="1455.1,566.2 1458.3,537 1460.5,515.5 1463.7,485.3 1472.3,463.8 1483.1,437.9 1493.9,414.2 1511.1,390.5 1534.8,370 1565,353.9 1595.2,343.1 1622.9,334.3 1661,327.4 1706.9,321.3 1752.7,316 1798.5,311.4 1844.3,308 1890,305.3 1950,303.2 2007.7,300.7 2085.7,298.6 2164.6,296.6 2243,294.6" fill="none" stroke="#ffff00" stroke-width="4.4" stroke-linejoin="round"/>
<text x="35" y="232.4" font-size="56" fill="#eeeeee" text-anchor="start" font-weight="normal" textLength="228" lengthAdjust="spacingAndGlyphs" stroke="#eeeeee" stroke-width="0.7">Grayscale</text>
<text x="120" y="737" font-size="40" fill="#eeeeee" text-anchor="start" font-weight="normal" textLength="295" lengthAdjust="spacingAndGlyphs" stroke="#eeeeee" stroke-width="0.5">Avg dE2000: 1,7</text>
<text x="684.5" y="737" font-size="40" fill="#eeeeee" text-anchor="start" font-weight="normal" textLength="259.5" lengthAdjust="spacingAndGlyphs" stroke="#eeeeee" stroke-width="0.5">Avg CCT: 6498</text>
<text x="1200" y="737" font-size="40" fill="#eeeeee" text-anchor="start" font-weight="normal" textLength="375.5" lengthAdjust="spacingAndGlyphs" stroke="#eeeeee" stroke-width="0.5">Contrast Ratio: 3972</text>
<text x="1789" y="737" font-size="40" fill="#eeeeee" text-anchor="start" font-weight="normal" textLength="347" lengthAdjust="spacingAndGlyphs" stroke="#eeeeee" stroke-width="0.5">Total Gamma: 2,05</text>
<rect x="1" y="765" width="2290" height="180" fill="#000"/>
<rect x="338.5" y="765" width="1" height="180" fill="#121212"/>
<rect x="2093.5" y="765" width="1" height="180" fill="#121212"/>
<text x="0" y="0" font-size="17" fill="#eee" text-anchor="middle" font-weight="normal" textLength="46" lengthAdjust="spacingAndGlyphs" transform="translate(357,804) rotate(-90)">Actual</text>
<text x="0" y="0" font-size="17" fill="#eee" text-anchor="middle" font-weight="normal" textLength="47" lengthAdjust="spacingAndGlyphs" transform="translate(357,882.5) rotate(-90)">Target</text>
<rect x="369" y="775" width="131" height="68" fill="rgb(0,0,0)"/>
<rect x="369" y="843" width="131" height="69" fill="rgb(0,0,0)"/>
<rect x="368" y="774" width="133" height="139" fill="none" stroke="#fff" stroke-width="2"/>
<text x="434.5" y="933" font-size="17" fill="#fff" text-anchor="middle" font-weight="normal" >0</text>
<rect x="527" y="775" width="131" height="68" fill="rgb(21,21,21)"/>
<rect x="527" y="843" width="131" height="69" fill="rgb(27,27,27)"/>
<rect x="526" y="774" width="133" height="139" fill="none" stroke="#fff" stroke-width="2"/>
<text x="592.5" y="933" font-size="17" fill="#fff" text-anchor="middle" font-weight="normal" >10</text>
<rect x="685" y="775" width="131" height="68" fill="rgb(51,51,51)"/>
<rect x="685" y="843" width="131" height="69" fill="rgb(51,51,51)"/>
<rect x="684" y="774" width="133" height="139" fill="none" stroke="#fff" stroke-width="2"/>
<text x="750.5" y="933" font-size="17" fill="#fff" text-anchor="middle" font-weight="normal" >20</text>
<rect x="843" y="775" width="131" height="68" fill="rgb(80,80,80)"/>
<rect x="843" y="843" width="131" height="69" fill="rgb(75,75,75)"/>
<rect x="842" y="774" width="133" height="139" fill="none" stroke="#fff" stroke-width="2"/>
<text x="908.5" y="933" font-size="17" fill="#fff" text-anchor="middle" font-weight="normal" >30</text>
<rect x="1001" y="775" width="131" height="68" fill="rgb(110,110,110)"/>
<rect x="1001" y="843" width="131" height="69" fill="rgb(104,104,104)"/>
<rect x="1000" y="774" width="133" height="139" fill="none" stroke="#fff" stroke-width="2"/>
<text x="1066.5" y="933" font-size="17" fill="#fff" text-anchor="middle" font-weight="normal" >40</text>
<rect x="1159" y="775" width="131" height="68" fill="rgb(136,136,136)"/>
<rect x="1159" y="843" width="131" height="69" fill="rgb(128,128,128)"/>
<rect x="1158" y="774" width="133" height="139" fill="none" stroke="#fff" stroke-width="2"/>
<text x="1224.5" y="933" font-size="17" fill="#fff" text-anchor="middle" font-weight="normal" >50</text>
<rect x="1317" y="775" width="131" height="68" fill="rgb(163,163,163)"/>
<rect x="1317" y="843" width="131" height="69" fill="rgb(155,155,155)"/>
<rect x="1316" y="774" width="133" height="139" fill="none" stroke="#fff" stroke-width="2"/>
<text x="1382.5" y="933" font-size="17" fill="#fff" text-anchor="middle" font-weight="normal" >60</text>
<rect x="1475" y="775" width="131" height="68" fill="rgb(186,186,186)"/>
<rect x="1475" y="843" width="131" height="69" fill="rgb(178,178,178)"/>
<rect x="1474" y="774" width="133" height="139" fill="none" stroke="#fff" stroke-width="2"/>
<text x="1540.5" y="933" font-size="17" fill="#fff" text-anchor="middle" font-weight="normal" >70</text>
<rect x="1633" y="775" width="131" height="68" fill="rgb(211,211,211)"/>
<rect x="1633" y="843" width="131" height="69" fill="rgb(203,203,203)"/>
<rect x="1632" y="774" width="133" height="139" fill="none" stroke="#fff" stroke-width="2"/>
<text x="1698.5" y="933" font-size="17" fill="#fff" text-anchor="middle" font-weight="normal" >80</text>
<rect x="1791" y="775" width="131" height="68" fill="rgb(232,232,232)"/>
<rect x="1791" y="843" width="131" height="69" fill="rgb(228,228,228)"/>
<rect x="1790" y="774" width="133" height="139" fill="none" stroke="#fff" stroke-width="2"/>
<text x="1856.5" y="933" font-size="17" fill="#fff" text-anchor="middle" font-weight="normal" >90</text>
<rect x="1949" y="775" width="131" height="68" fill="rgb(255,255,255)"/>
<rect x="1949" y="843" width="131" height="69" fill="rgb(255,255,255)"/>
<rect x="1948" y="774" width="133" height="139" fill="none" stroke="#fff" stroke-width="2"/>
<text x="2014.5" y="933" font-size="17" fill="#fff" text-anchor="middle" font-weight="normal" >100</text>
<text x="22" y="1018.5" font-size="40" fill="#eeeeee" text-anchor="start" font-weight="normal" textLength="299.5" lengthAdjust="spacingAndGlyphs" stroke="#eeeeee" stroke-width="0.5">Current Reading</text>
<text x="21" y="1076" font-size="32" fill="#eeeeee" text-anchor="start" font-weight="normal" textLength="120" lengthAdjust="spacingAndGlyphs" stroke="#eeeeee" stroke-width="0.5">x: 0,313</text>
<text x="21" y="1132" font-size="32" fill="#eeeeee" text-anchor="start" font-weight="normal" textLength="141" lengthAdjust="spacingAndGlyphs" stroke="#eeeeee" stroke-width="0.5">y: 0,3292</text>
<text x="21" y="1188" font-size="32" fill="#eeeeee" text-anchor="start" font-weight="normal" textLength="152" lengthAdjust="spacingAndGlyphs" stroke="#eeeeee" stroke-width="0.5">fL: 119,09</text>
<text x="21" y="1244.5" font-size="32" fill="#eeeeee" text-anchor="start" font-weight="normal" textLength="217.5" lengthAdjust="spacingAndGlyphs" stroke="#eeeeee" stroke-width="0.5">cd/m²: 408,03</text>
<rect x="450" y="975" width="402" height="295" fill="#1e1e1e"/>
<rect x="460" y="984" width="384" height="280" fill="#333333"/>
<rect x="512" y="989" width="326" height="236" fill="url(#cieB)"/>
<rect x="512" y="989" width="326" height="236" fill="url(#cieM)" mask="url(#maskM)"/>
<rect x="512" y="989" width="326" height="236" fill="url(#cieT)" mask="url(#maskT)"/>
<rect x="511.4" y="988.4" width="327.2" height="237.2" fill="none" stroke="#9a9a9a" stroke-width="1.8"/>
<rect x="503" y="1006" width="7" height="2" fill="#dcdcdc"/>
<text x="501.5" y="1014" font-size="19.5" fill="#dcdcdc" text-anchor="end" font-weight="normal" >0,35</text>
<rect x="503" y="1055" width="7" height="2" fill="#dcdcdc"/>
<text x="501.5" y="1063" font-size="19.5" fill="#dcdcdc" text-anchor="end" font-weight="normal" >0,34</text>
<rect x="503" y="1102" width="7" height="2" fill="#dcdcdc"/>
<text x="501.5" y="1110" font-size="19.5" fill="#dcdcdc" text-anchor="end" font-weight="normal" >0,33</text>
<rect x="503" y="1148" width="7" height="2" fill="#dcdcdc"/>
<text x="501.5" y="1156" font-size="19.5" fill="#dcdcdc" text-anchor="end" font-weight="normal" >0,32</text>
<rect x="503" y="1195" width="7" height="2" fill="#dcdcdc"/>
<text x="501.5" y="1203" font-size="19.5" fill="#dcdcdc" text-anchor="end" font-weight="normal" >0,31</text>
<rect x="524.0" y="1226" width="2" height="7" fill="#dcdcdc"/>
<text x="525.0" y="1254" font-size="19" fill="#dcdcdc" text-anchor="middle" font-weight="normal" >0,29</text>
<rect x="589.25" y="1226" width="2" height="7" fill="#dcdcdc"/>
<text x="590.25" y="1254" font-size="19" fill="#dcdcdc" text-anchor="middle" font-weight="normal" >0,3</text>
<rect x="654.5" y="1226" width="2" height="7" fill="#dcdcdc"/>
<text x="655.5" y="1254" font-size="19" fill="#dcdcdc" text-anchor="middle" font-weight="normal" >0,31</text>
<rect x="719.75" y="1226" width="2" height="7" fill="#dcdcdc"/>
<text x="720.75" y="1254" font-size="19" fill="#dcdcdc" text-anchor="middle" font-weight="normal" >0,32</text>
<rect x="785.0" y="1226" width="2" height="7" fill="#dcdcdc"/>
<text x="786.0" y="1254" font-size="19" fill="#dcdcdc" text-anchor="middle" font-weight="normal" >0,33</text>
<path clip-path="url(#cieclip)" d="M550,1227 L595.3,1194.3 L634.8,1165.8 L674.3,1137.4 L723.1,1102.8 L766.2,1073.4 L809.3,1045.9 L840,1026.5" fill="none" stroke="#000" stroke-width="5.2" stroke-linejoin="round"/>
<circle cx="674" cy="1117" r="6" fill="#333" stroke="#111" stroke-width="1"/>
<circle cx="672.2" cy="1111.8" r="5.5" fill="#c8c8c8" stroke="#222" stroke-width="1"/>
<circle cx="683.7" cy="1104.7" r="6.2" fill="#222" stroke="#111" stroke-width="1"/>
<circle cx="676.6" cy="1104.7" r="5.5" fill="#fff" stroke="#111" stroke-width="1"/>
<rect x="665" y="1097" width="18" height="18.5" fill="none" stroke="#000" stroke-width="2"/>
<rect x="861.5" y="956" width="1321" height="288" fill="#000"/>
<rect x="864" y="957.8" width="1316" height="39" fill="url(#hdrg)"/>
<text x="1122.7" y="985" font-size="19" fill="#fff" text-anchor="middle" font-weight="bold" >0</text>
<text x="1223.3500000000001" y="985" font-size="19" fill="#fff" text-anchor="middle" font-weight="bold" >10</text>
<text x="1324.0" y="985" font-size="19" fill="#fff" text-anchor="middle" font-weight="bold" >20</text>
<text x="1424.65" y="985" font-size="19" fill="#fff" text-anchor="middle" font-weight="bold" >30</text>
<text x="1525.3000000000002" y="985" font-size="19" fill="#fff" text-anchor="middle" font-weight="bold" >40</text>
<text x="1625.95" y="985" font-size="19" fill="#fff" text-anchor="middle" font-weight="bold" >50</text>
<text x="1726.6000000000001" y="985" font-size="19" fill="#fff" text-anchor="middle" font-weight="bold" >60</text>
<text x="1827.25" y="985" font-size="19" fill="#fff" text-anchor="middle" font-weight="bold" >70</text>
<text x="1927.9" y="985" font-size="19" fill="#fff" text-anchor="middle" font-weight="bold" >80</text>
<text x="2028.5500000000002" y="985" font-size="19" fill="#fff" text-anchor="middle" font-weight="bold" >90</text>
<text x="2129.2" y="985" font-size="19" fill="#fff" text-anchor="middle" font-weight="bold" >100</text>
<rect x="864" y="996.8" width="1316" height="35.43" fill="#424242"/>
<text x="880.5" y="1022.0999999999999" font-size="22" fill="#f4f4f4" text-anchor="start" font-weight="bold" textLength="81.3" lengthAdjust="spacingAndGlyphs" >x: CIE31</text>
<text x="0" y="0" transform="translate(1078.2 1022.0) scale(0.933 1)" font-size="22.5" fill="#f2f2f2" text-anchor="start" font-weight="normal" >0,349</text>
<text x="0" y="0" transform="translate(1178.9 1022.0) scale(0.933 1)" font-size="22.5" fill="#f2f2f2" text-anchor="start" font-weight="normal" >0,314</text>
<text x="0" y="0" transform="translate(1279.6000000000001 1022.0) scale(0.933 1)" font-size="22.5" fill="#f2f2f2" text-anchor="start" font-weight="normal" >0,313</text>
<text x="0" y="0" transform="translate(1380.3000000000002 1022.0) scale(0.933 1)" font-size="22.5" fill="#f2f2f2" text-anchor="start" font-weight="normal" >0,312</text>
<text x="0" y="0" transform="translate(1481.0 1022.0) scale(0.933 1)" font-size="22.5" fill="#f2f2f2" text-anchor="start" font-weight="normal" >0,313</text>
<text x="0" y="0" transform="translate(1581.7 1022.0) scale(0.933 1)" font-size="22.5" fill="#f2f2f2" text-anchor="start" font-weight="normal" >0,312</text>
<text x="0" y="0" transform="translate(1682.4 1022.0) scale(0.933 1)" font-size="22.5" fill="#f2f2f2" text-anchor="start" font-weight="normal" >0,313</text>
<text x="0" y="0" transform="translate(1783.1 1022.0) scale(0.933 1)" font-size="22.5" fill="#f2f2f2" text-anchor="start" font-weight="normal" >0,313</text>
<text x="0" y="0" transform="translate(1883.8000000000002 1022.0) scale(0.933 1)" font-size="22.5" fill="#f2f2f2" text-anchor="start" font-weight="normal" >0,313</text>
<text x="0" y="0" transform="translate(1984.5 1022.0) scale(0.933 1)" font-size="22.5" fill="#f2f2f2" text-anchor="start" font-weight="normal" >0,313</text>
<text x="0" y="0" transform="translate(2085.2 1022.0) scale(0.933 1)" font-size="22.5" fill="#f2f2f2" text-anchor="start" font-weight="normal" >0,313</text>
<rect x="864" y="1032.03" width="1316" height="35.43" fill="#808080"/>
<text x="880.5" y="1057.33" font-size="22" fill="#f4f4f4" text-anchor="start" font-weight="bold" textLength="81.3" lengthAdjust="spacingAndGlyphs" >y: CIE31</text>
<text x="0" y="0" transform="translate(1078.2 1057.23) scale(0.933 1)" font-size="22.5" fill="#f2f2f2" text-anchor="start" font-weight="normal" >0,308</text>
<text x="0" y="0" transform="translate(1178.9 1057.23) scale(0.933 1)" font-size="22.5" fill="#f2f2f2" text-anchor="start" font-weight="normal" >0,329</text>
<text x="0" y="0" transform="translate(1279.6000000000001 1057.23) scale(0.933 1)" font-size="22.5" fill="#f2f2f2" text-anchor="start" font-weight="normal" >0,327</text>
<text x="0" y="0" transform="translate(1380.3000000000002 1057.23) scale(0.933 1)" font-size="22.5" fill="#f2f2f2" text-anchor="start" font-weight="normal" >0,328</text>
<text x="0" y="0" transform="translate(1481.0 1057.23) scale(0.933 1)" font-size="22.5" fill="#f2f2f2" text-anchor="start" font-weight="normal" >0,328</text>
<text x="0" y="0" transform="translate(1581.7 1057.23) scale(0.933 1)" font-size="22.5" fill="#f2f2f2" text-anchor="start" font-weight="normal" >0,328</text>
<text x="0" y="0" transform="translate(1682.4 1057.23) scale(0.933 1)" font-size="22.5" fill="#f2f2f2" text-anchor="start" font-weight="normal" >0,328</text>
<text x="0" y="0" transform="translate(1783.1 1057.23) scale(0.933 1)" font-size="22.5" fill="#f2f2f2" text-anchor="start" font-weight="normal" >0,329</text>
<text x="0" y="0" transform="translate(1883.8000000000002 1057.23) scale(0.933 1)" font-size="22.5" fill="#f2f2f2" text-anchor="start" font-weight="normal" >0,328</text>
<text x="0" y="0" transform="translate(1984.5 1057.23) scale(0.933 1)" font-size="22.5" fill="#f2f2f2" text-anchor="start" font-weight="normal" >0,329</text>
<text x="0" y="0" transform="translate(2085.2 1057.23) scale(0.933 1)" font-size="22.5" fill="#f2f2f2" text-anchor="start" font-weight="normal" >0,329</text>
<rect x="864" y="1067.26" width="1316" height="35.43" fill="#424242"/>
<text x="0" y="0" transform="translate(880.5 1092.56) scale(0.955 1)" font-size="22" fill="#f4f4f4" text-anchor="start" font-weight="bold" >Y</text>
<text x="0" y="0" transform="translate(1078.2 1092.46) scale(0.933 1)" font-size="22.5" fill="#f2f2f2" text-anchor="start" font-weight="normal" >0,103</text>
<text x="0" y="0" transform="translate(1178.9 1092.46) scale(0.933 1)" font-size="22.5" fill="#f2f2f2" text-anchor="start" font-weight="normal" >2,844</text>
<text x="0" y="0" transform="translate(1279.6000000000001 1092.46) scale(0.933 1)" font-size="22.5" fill="#f2f2f2" text-anchor="start" font-weight="normal" >12,866</text>
<text x="0" y="0" transform="translate(1380.3000000000002 1092.46) scale(0.933 1)" font-size="22.5" fill="#f2f2f2" text-anchor="start" font-weight="normal" >31,704</text>
<text x="0" y="0" transform="translate(1481.0 1092.46) scale(0.933 1)" font-size="22.5" fill="#f2f2f2" text-anchor="start" font-weight="normal" >61,246</text>
<text x="0" y="0" transform="translate(1581.7 1092.46) scale(0.933 1)" font-size="22.5" fill="#f2f2f2" text-anchor="start" font-weight="normal" >100,992</text>
<text x="0" y="0" transform="translate(1682.4 1092.46) scale(0.933 1)" font-size="22.5" fill="#f2f2f2" text-anchor="start" font-weight="normal" >148,052</text>
<text x="0" y="0" transform="translate(1783.1 1092.46) scale(0.933 1)" font-size="22.5" fill="#f2f2f2" text-anchor="start" font-weight="normal" >200,676</text>
<text x="0" y="0" transform="translate(1883.8000000000002 1092.46) scale(0.933 1)" font-size="22.5" fill="#f2f2f2" text-anchor="start" font-weight="normal" >263,611</text>
<text x="0" y="0" transform="translate(1984.5 1092.46) scale(0.933 1)" font-size="22.5" fill="#f2f2f2" text-anchor="start" font-weight="normal" >333,096</text>
<text x="0" y="0" transform="translate(2085.2 1092.46) scale(0.933 1)" font-size="22.5" fill="#f2f2f2" text-anchor="start" font-weight="normal" >408,034</text>
<rect x="864" y="1102.49" width="1316" height="35.43" fill="#808080"/>
<text x="880.5" y="1127.79" font-size="22" fill="#f4f4f4" text-anchor="start" font-weight="bold" textLength="85.6" lengthAdjust="spacingAndGlyphs" >Target Y</text>
<text x="0" y="0" transform="translate(1078.2 1127.69) scale(0.933 1)" font-size="22.5" fill="#f2f2f2" text-anchor="start" font-weight="normal" >0,000</text>
<text x="0" y="0" transform="translate(1178.9 1127.69) scale(0.933 1)" font-size="22.5" fill="#f2f2f2" text-anchor="start" font-weight="normal" >4,215</text>
<text x="0" y="0" transform="translate(1279.6000000000001 1127.69) scale(0.933 1)" font-size="22.5" fill="#f2f2f2" text-anchor="start" font-weight="normal" >13,508</text>
<text x="0" y="0" transform="translate(1380.3000000000002 1127.69) scale(0.933 1)" font-size="22.5" fill="#f2f2f2" text-anchor="start" font-weight="normal" >29,489</text>
<text x="0" y="0" transform="translate(1481.0 1127.69) scale(0.933 1)" font-size="22.5" fill="#f2f2f2" text-anchor="start" font-weight="normal" >54,215</text>
<text x="0" y="0" transform="translate(1581.7 1127.69) scale(0.933 1)" font-size="22.5" fill="#f2f2f2" text-anchor="start" font-weight="normal" >88,079</text>
<text x="0" y="0" transform="translate(1682.4 1127.69) scale(0.933 1)" font-size="22.5" fill="#f2f2f2" text-anchor="start" font-weight="normal" >129,978</text>
<text x="0" y="0" transform="translate(1783.1 1127.69) scale(0.933 1)" font-size="22.5" fill="#f2f2f2" text-anchor="start" font-weight="normal" >181,657</text>
<text x="0" y="0" transform="translate(1883.8000000000002 1127.69) scale(0.933 1)" font-size="22.5" fill="#f2f2f2" text-anchor="start" font-weight="normal" >246,382</text>
<text x="0" y="0" transform="translate(1984.5 1127.69) scale(0.933 1)" font-size="22.5" fill="#f2f2f2" text-anchor="start" font-weight="normal" >322,877</text>
<text x="0" y="0" transform="translate(2085.2 1127.69) scale(0.933 1)" font-size="22.5" fill="#f2f2f2" text-anchor="start" font-weight="normal" >408,034</text>
<rect x="864" y="1137.72" width="1316" height="35.43" fill="#424242"/>
<text x="880.5" y="1163.02" font-size="22" fill="#f4f4f4" text-anchor="start" font-weight="bold" textLength="174" lengthAdjust="spacingAndGlyphs" >Gamma Log/Log</text>
<text x="0" y="0" transform="translate(1078.2 1162.92) scale(0.933 1)" font-size="22.5" fill="#f2f2f2" text-anchor="start" font-weight="normal" >1,278</text>
<text x="0" y="0" transform="translate(1178.9 1162.92) scale(0.933 1)" font-size="22.5" fill="#f2f2f2" text-anchor="start" font-weight="normal" >2,175</text>
<text x="0" y="0" transform="translate(1279.6000000000001 1162.92) scale(0.933 1)" font-size="22.5" fill="#f2f2f2" text-anchor="start" font-weight="normal" >2,148</text>
<text x="0" y="0" transform="translate(1380.3000000000002 1162.92) scale(0.933 1)" font-size="22.5" fill="#f2f2f2" text-anchor="start" font-weight="normal" >2,111</text>
<text x="0" y="0" transform="translate(1481.0 1162.92) scale(0.933 1)" font-size="22.5" fill="#f2f2f2" text-anchor="start" font-weight="normal" >2,070</text>
<text x="0" y="0" transform="translate(1581.7 1162.92) scale(0.933 1)" font-size="22.5" fill="#f2f2f2" text-anchor="start" font-weight="normal" >2,026</text>
<text x="0" y="0" transform="translate(1682.4 1162.92) scale(0.933 1)" font-size="22.5" fill="#f2f2f2" text-anchor="start" font-weight="normal" >1,985</text>
<text x="0" y="0" transform="translate(1783.1 1162.92) scale(0.933 1)" font-size="22.5" fill="#f2f2f2" text-anchor="start" font-weight="normal" >1,974</text>
<text x="0" y="0" transform="translate(1883.8000000000002 1162.92) scale(0.933 1)" font-size="22.5" fill="#f2f2f2" text-anchor="start" font-weight="normal" >1,958</text>
<text x="0" y="0" transform="translate(1984.5 1162.92) scale(0.933 1)" font-size="22.5" fill="#f2f2f2" text-anchor="start" font-weight="normal" >1,967</text>
<text x="0" y="0" transform="translate(2085.2 1162.92) scale(0.933 1)" font-size="22.5" fill="#f2f2f2" text-anchor="start" font-weight="normal" >2,275</text>
<rect x="864" y="1172.9499999999998" width="1316" height="35.43" fill="#808080"/>
<text x="880.5" y="1198.2499999999998" font-size="22" fill="#f4f4f4" text-anchor="start" font-weight="bold" textLength="38.8" lengthAdjust="spacingAndGlyphs" >CCT</text>
<text x="0" y="0" transform="translate(1078.2 1198.1499999999999) scale(0.933 1)" font-size="22.5" fill="#f2f2f2" text-anchor="start" font-weight="normal" >4620,000</text>
<text x="0" y="0" transform="translate(1178.9 1198.1499999999999) scale(0.933 1)" font-size="22.5" fill="#f2f2f2" text-anchor="start" font-weight="normal" >6416,000</text>
<text x="0" y="0" transform="translate(1279.6000000000001 1198.1499999999999) scale(0.933 1)" font-size="22.5" fill="#f2f2f2" text-anchor="start" font-weight="normal" >6520,000</text>
<text x="0" y="0" transform="translate(1380.3000000000002 1198.1499999999999) scale(0.933 1)" font-size="22.5" fill="#f2f2f2" text-anchor="start" font-weight="normal" >6526,000</text>
<text x="0" y="0" transform="translate(1481.0 1198.1499999999999) scale(0.933 1)" font-size="22.5" fill="#f2f2f2" text-anchor="start" font-weight="normal" >6511,000</text>
<text x="0" y="0" transform="translate(1581.7 1198.1499999999999) scale(0.933 1)" font-size="22.5" fill="#f2f2f2" text-anchor="start" font-weight="normal" >6528,000</text>
<text x="0" y="0" transform="translate(1682.4 1198.1499999999999) scale(0.933 1)" font-size="22.5" fill="#f2f2f2" text-anchor="start" font-weight="normal" >6506,000</text>
<text x="0" y="0" transform="translate(1783.1 1198.1499999999999) scale(0.933 1)" font-size="22.5" fill="#f2f2f2" text-anchor="start" font-weight="normal" >6500,000</text>
<text x="0" y="0" transform="translate(1883.8000000000002 1198.1499999999999) scale(0.933 1)" font-size="22.5" fill="#f2f2f2" text-anchor="start" font-weight="normal" >6504,000</text>
<text x="0" y="0" transform="translate(1984.5 1198.1499999999999) scale(0.933 1)" font-size="22.5" fill="#f2f2f2" text-anchor="start" font-weight="normal" >6478,000</text>
<text x="0" y="0" transform="translate(2085.2 1198.1499999999999) scale(0.933 1)" font-size="22.5" fill="#f2f2f2" text-anchor="start" font-weight="normal" >6487,000</text>
<rect x="864" y="1208.1799999999998" width="1316" height="35.43" fill="#424242"/>
<text x="880.5" y="1233.4799999999998" font-size="22" fill="#f4f4f4" text-anchor="start" font-weight="bold" textLength="84.2" lengthAdjust="spacingAndGlyphs" >ΔE 2000</text>
<text x="0" y="0" transform="translate(1078.2 1233.3799999999999) scale(0.933 1)" font-size="22.5" fill="#f2f2f2" text-anchor="start" font-weight="normal" >0,309</text>
<text x="0" y="0" transform="translate(1178.9 1233.3799999999999) scale(0.933 1)" font-size="22.5" fill="#f2f2f2" text-anchor="start" font-weight="normal" >1,830</text>
<text x="0" y="0" transform="translate(1279.6000000000001 1233.3799999999999) scale(0.933 1)" font-size="22.5" fill="#f2f2f2" text-anchor="start" font-weight="normal" >0,752</text>
<text x="0" y="0" transform="translate(1380.3000000000002 1233.3799999999999) scale(0.933 1)" font-size="22.5" fill="#f2f2f2" text-anchor="start" font-weight="normal" >0,996</text>
<text x="0" y="0" transform="translate(1481.0 1233.3799999999999) scale(0.933 1)" font-size="22.5" fill="#f2f2f2" text-anchor="start" font-weight="normal" >2,343</text>
<text x="0" y="0" transform="translate(1581.7 1233.3799999999999) scale(0.933 1)" font-size="22.5" fill="#f2f2f2" text-anchor="start" font-weight="normal" >3,095</text>
<text x="0" y="0" transform="translate(1682.4 1233.3799999999999) scale(0.933 1)" font-size="22.5" fill="#f2f2f2" text-anchor="start" font-weight="normal" >2,931</text>
<text x="0" y="0" transform="translate(1783.1 1233.3799999999999) scale(0.933 1)" font-size="22.5" fill="#f2f2f2" text-anchor="start" font-weight="normal" >2,233</text>
<text x="0" y="0" transform="translate(1883.8000000000002 1233.3799999999999) scale(0.933 1)" font-size="22.5" fill="#f2f2f2" text-anchor="start" font-weight="normal" >1,603</text>
<text x="0" y="0" transform="translate(1984.5 1233.3799999999999) scale(0.933 1)" font-size="22.5" fill="#f2f2f2" text-anchor="start" font-weight="normal" >0,875</text>
<text x="0" y="0" transform="translate(2085.2 1233.3799999999999) scale(0.933 1)" font-size="22.5" fill="#f2f2f2" text-anchor="start" font-weight="normal" >0,159</text>
<rect x="1" y="1329" width="2291" height="62" fill="url(#bbg)"/>
<rect x="2" y="1329" width="150" height="61" rx="5" fill="url(#pbtn)"/>
<rect x="7" y="1334" width="140" height="36" rx="4" fill="rgb(0,0,0)" stroke="#6a6a6a" stroke-width="0.8"/>
<text x="77" y="1385" font-size="12" fill="#2a2a2a" text-anchor="middle" font-weight="normal" stroke="#2a2a2a" stroke-width="0.35">0</text>
<rect x="154" y="1329" width="150" height="61" rx="5" fill="url(#pbtn)"/>
<rect x="159" y="1334" width="140" height="36" rx="4" fill="rgb(26,26,26)" stroke="#6a6a6a" stroke-width="0.8"/>
<text x="229" y="1385" font-size="12" fill="#2a2a2a" text-anchor="middle" font-weight="normal" stroke="#2a2a2a" stroke-width="0.35">10</text>
<rect x="306" y="1329" width="150" height="61" rx="5" fill="url(#pbtn)"/>
<rect x="311" y="1334" width="140" height="36" rx="4" fill="rgb(51,51,51)" stroke="#6a6a6a" stroke-width="0.8"/>
<text x="381" y="1385" font-size="12" fill="#2a2a2a" text-anchor="middle" font-weight="normal" stroke="#2a2a2a" stroke-width="0.35">20</text>
<rect x="458" y="1329" width="150" height="61" rx="5" fill="url(#pbtn)"/>
<rect x="463" y="1334" width="140" height="36" rx="4" fill="rgb(76,76,76)" stroke="#6a6a6a" stroke-width="0.8"/>
<text x="533" y="1385" font-size="12" fill="#2a2a2a" text-anchor="middle" font-weight="normal" stroke="#2a2a2a" stroke-width="0.35">30</text>
<rect x="610" y="1329" width="150" height="61" rx="5" fill="url(#pbtn)"/>
<rect x="615" y="1334" width="140" height="36" rx="4" fill="rgb(102,102,102)" stroke="#6a6a6a" stroke-width="0.8"/>
<text x="685" y="1385" font-size="12" fill="#2a2a2a" text-anchor="middle" font-weight="normal" stroke="#2a2a2a" stroke-width="0.35">40</text>
<rect x="762" y="1329" width="150" height="61" rx="5" fill="url(#pbtn)"/>
<rect x="767" y="1334" width="140" height="36" rx="4" fill="rgb(128,128,128)" stroke="#6a6a6a" stroke-width="0.8"/>
<text x="837" y="1385" font-size="12" fill="#2a2a2a" text-anchor="middle" font-weight="normal" stroke="#2a2a2a" stroke-width="0.35">50</text>
<rect x="914" y="1329" width="150" height="61" rx="5" fill="url(#pbtn)"/>
<rect x="919" y="1334" width="140" height="36" rx="4" fill="rgb(153,153,153)" stroke="#6a6a6a" stroke-width="0.8"/>
<text x="989" y="1385" font-size="12" fill="#2a2a2a" text-anchor="middle" font-weight="normal" stroke="#2a2a2a" stroke-width="0.35">60</text>
<rect x="1066" y="1329" width="150" height="61" rx="5" fill="url(#pbtn)"/>
<rect x="1071" y="1334" width="140" height="36" rx="4" fill="rgb(178,178,178)" stroke="#6a6a6a" stroke-width="0.8"/>
<text x="1141" y="1385" font-size="12" fill="#2a2a2a" text-anchor="middle" font-weight="normal" stroke="#2a2a2a" stroke-width="0.35">70</text>
<rect x="1218" y="1329" width="150" height="61" rx="5" fill="url(#pbtn)"/>
<rect x="1223" y="1334" width="140" height="36" rx="4" fill="rgb(204,204,204)" stroke="#6a6a6a" stroke-width="0.8"/>
<text x="1293" y="1385" font-size="12" fill="#2a2a2a" text-anchor="middle" font-weight="normal" stroke="#2a2a2a" stroke-width="0.35">80</text>
<rect x="1370" y="1329" width="150" height="61" rx="5" fill="url(#pbtn)"/>
<rect x="1375" y="1334" width="140" height="36" rx="4" fill="rgb(230,230,230)" stroke="#6a6a6a" stroke-width="0.8"/>
<text x="1445" y="1385" font-size="12" fill="#2a2a2a" text-anchor="middle" font-weight="normal" stroke="#2a2a2a" stroke-width="0.35">90</text>
<rect x="1522" y="1329" width="150" height="61" rx="5" fill="url(#pbtnS)"/>
<rect x="1527" y="1334" width="140" height="36" rx="4" fill="#fff"/>
<text x="1597" y="1385" font-size="12" fill="#fff" text-anchor="middle" font-weight="bold" >100</text>
<rect x="1969" y="1329" width="48" height="61" rx="3" fill="url(#cbtn2)"/>
<rect x="1969" y="1347.2" width="48" height="1.2" fill="#333"/>
<circle cx="1993" cy="1337.5" r="7" fill="url(#circg)"/>
<path d="M1989,1339.5 H1997 L1993,1335Z" fill="#333"/>
<rect x="1978.5" y="1353.5" width="28" height="15" fill="#b8b8b8"/>
<rect x="1978.5" y="1368.5" width="28" height="14" fill="#989898"/>
<rect x="1978.5" y="1353.5" width="28" height="29" rx="3" fill="none" stroke="#2a2a2a" stroke-width="2.5"/>
<rect x="1986" y="1362" width="13.5" height="13" fill="#111"/>
<rect x="2018" y="1329" width="46" height="30" fill="url(#cbtn)"/>
<rect x="2063.5" y="1329" width="1" height="30" fill="#555"/>
<circle cx="2039.5" cy="1343.5" r="9.5" fill="url(#circg)" opacity="0.9"/>
<rect x="2064.7" y="1329" width="44.600000000000364" height="30" fill="url(#cbtn)"/>
<rect x="2108.8" y="1329" width="1" height="30" fill="#555"/>
<circle cx="2085.5" cy="1343.5" r="9.5" fill="url(#circg)" opacity="0.9"/>
<rect x="2110" y="1329" width="44" height="30" fill="url(#cbtn)"/>
<rect x="2153.5" y="1329" width="1" height="30" fill="#555"/>
<circle cx="2130.5" cy="1343.5" r="9.5" fill="url(#circg)" opacity="0.9"/>
<rect x="2155" y="1329" width="44" height="30" fill="url(#cbtn)"/>
<rect x="2198.5" y="1329" width="1" height="30" fill="#555"/>
<circle cx="2175.5" cy="1343.5" r="9.5" fill="url(#circg)" opacity="0.9"/>
<rect x="2199.8" y="1329" width="44.19999999999982" height="30" fill="url(#cbtn)"/>
<rect x="2243.5" y="1329" width="1" height="30" fill="#555"/>
<circle cx="2220.4" cy="1343.5" r="9.5" fill="url(#circg)" opacity="0.9"/>
<rect x="2036.5" y="1339.5" width="7.5" height="7.5" fill="#333"/>
<path d="M2083.5,1338.5 L2091.5,1344 L2083.5,1349.5Z" fill="#333"/>
<path d="M2128.5,1338.5 h-2 v11 h2 M2135,1338.5 h2 v11 h-2" fill="none" stroke="#333" stroke-width="1.6"/>
<circle cx="2130.5" cy="1344" r="0.9" fill="#333"/><circle cx="2133" cy="1344" r="0.9" fill="#333"/>
<path d="M2173.5,1344 c-3,-3.5 -6,-3.5 -6,0 c0,3.5 3,3.5 6,0 c3,-3.5 6,-3.5 6,0 c0,3.5 -3,3.5 -6,0Z" fill="none" stroke="#333" stroke-width="1.6"/>
<path d="M2216,1343 a5,5 0 0 1 9,-2.5 M2226,1345 a5,5 0 0 1 -9,2.5" fill="none" stroke="#333" stroke-width="1.8"/>
<path d="M2223,1338 l3,2.5 l-3.5,1.2Z M2219,1350 l-3,-2.5 l3.5,-1.2Z" fill="#333"/>
<rect x="2244" y="1329" width="47" height="30" fill="#262626"/>
<circle cx="2268" cy="1343" r="9.5" fill="#3a3a3a"/>
<rect x="2018" y="1359.5" width="272.5" height="30" rx="3" fill="url(#cbtn)"/>
<rect x="2154" y="1359.5" width="1" height="30" fill="#555"/>
<circle cx="2048.7" cy="1374.6" r="9.5" fill="url(#circg)"/>
<circle cx="2262" cy="1374.6" r="9.5" fill="url(#circg)"/>
<path d="M2048,1369.5 l-4.5,5 l4.5,5 M2053,1369.5 l-4.5,5 l4.5,5" fill="none" stroke="#333" stroke-width="1.6"/>
<path d="M2259,1369.5 l4.5,5 l-4.5,5 M2264,1369.5 l4.5,5 l-4.5,5" fill="none" stroke="#333" stroke-width="1.6"/>
<text x="2075.5" y="1382.5" font-size="21" fill="#303030" text-anchor="start" font-weight="normal" textLength="50" lengthAdjust="spacingAndGlyphs" stroke="#303030" stroke-width="0.8">Back</text>
<text x="2182.5" y="1382.5" font-size="21" fill="#303030" text-anchor="start" font-weight="normal" textLength="52" lengthAdjust="spacingAndGlyphs" stroke="#303030" stroke-width="0.8">Next</text>
<rect x="0" y="0" width="1" height="1392" fill="#7a7a7a"/>
<rect x="2292" y="0" width="1" height="1392" fill="#7a7a7a"/>
<rect x="0" y="1391" width="2293" height="1" fill="#7a7a7a"/>
<rect x="2285" y="97" width="7" height="1231" fill="url(#rsh)"/>
</svg>
</body></html>
